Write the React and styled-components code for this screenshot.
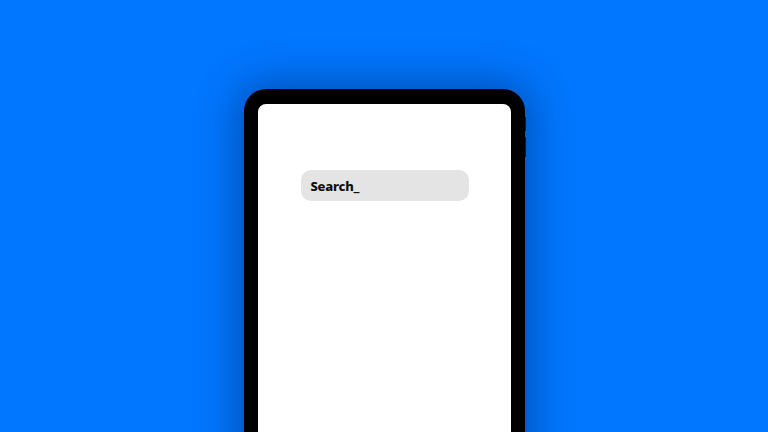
import React from "react";
import styled, { createGlobalStyle } from "styled-components";

const GlobalStyle = createGlobalStyle`
  html, body {
    margin: 0;
    padding: 0;
    height: 100%;
    overflow: hidden;
  }
  body {
    background: #0077fe;
    font-family: "Lato", "Noto Sans", sans-serif;
  }
`;

const Stage = styled.main`
  width: 768px;
  height: 432px;
  overflow: hidden;
  display: flex;
  justify-content: center;
  padding-top: 89px;
  box-sizing: border-box;
  background: #0077fe;
`;

const Tablet = styled.div`
  position: relative;
  width: 281px;
  height: 420px;
  flex-shrink: 0;
  box-sizing: border-box;
  padding: 15px 14px 0 14px;
  background: #000;
  border-radius: 22px 22px 0 0;
  box-shadow: 0 0 40px 6px rgba(0, 30, 90, 0.45);
`;

const SideButton = styled.span`
  position: absolute;
  right: -1px;
  top: ${(p) => p.top}px;
  width: 1px;
  height: ${(p) => p.length}px;
  background: #0a1a30;
`;

const Screen = styled.div`
  height: 100%;
  background: #fff;
  border-radius: 8px 8px 0 0;
  padding: 66px 42px 0 43px;
  box-sizing: border-box;
`;

const SearchBar = styled.div`
  height: 31px;
  background: #e4e4e4;
  border-radius: 10px;
  display: flex;
  align-items: center;
  padding: 0 10px;
  font-family: "Noto Sans", "Lato", sans-serif;
  font-size: 13px;
  font-weight: 800;
  color: #0d0d0d;
  letter-spacing: -0.2px;
`;

export default function App() {
  return (
    <>
      <GlobalStyle />
      <Stage>
        <Tablet>
          <SideButton top={28} length={14} />
          <SideButton top={48} length={20} />
          <Screen>
            <SearchBar>Search_</SearchBar>
          </Screen>
        </Tablet>
      </Stage>
    </>
  );
}
